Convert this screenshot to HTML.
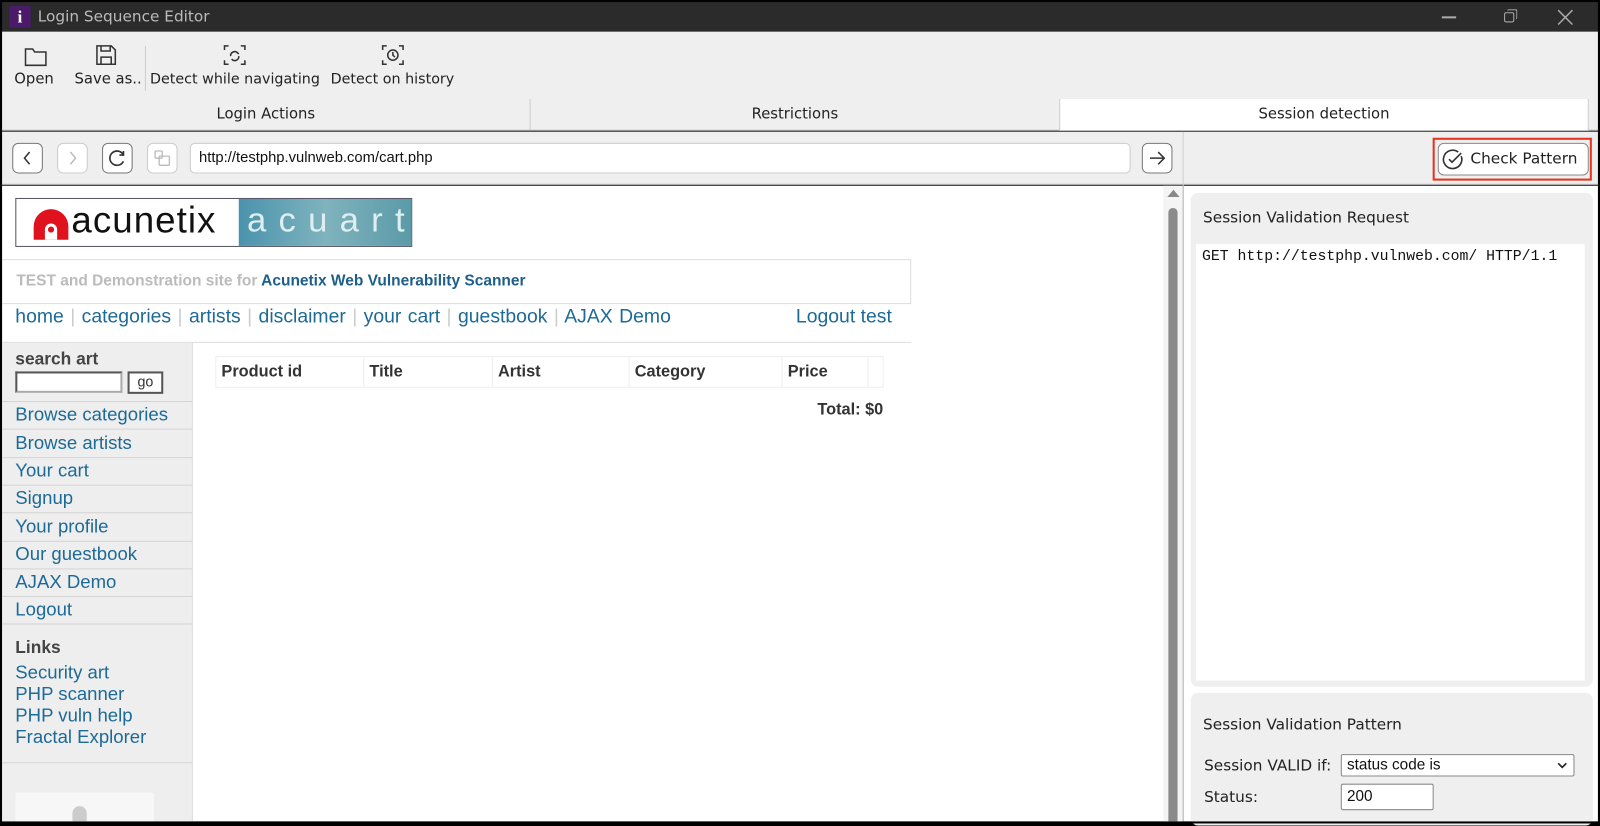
<!DOCTYPE html>
<html><head><meta charset="utf-8"><style>
*{box-sizing:border-box;margin:0;padding:0}
body{width:1600px;height:823px;overflow:hidden;background:#000;font-family:"Liberation Sans",sans-serif;position:relative}
#w{position:absolute;left:0;top:0;width:1568px;height:807px;transform:scale(1.020408);transform-origin:0 0;background:#000}
.a{position:absolute}
.ui{font-family:"DejaVu Sans","Liberation Sans",sans-serif}
.lnk{color:#1d6a96}
.side a{position:absolute;left:15px;font-size:18.2px;color:#1d6a96;text-decoration:none}
.sep{position:absolute;left:2px;width:186px;height:1px;background:#d4d4d4}
.nb{position:absolute;width:30px;height:30px;border:1px solid #777;border-radius:6px;background:#fff}
</style></head><body><div id="w">
<div class="a" style="left:2px;top:2px;width:1564px;height:29px;background:#2b2b2b"></div>
<div class="a" style="left:9px;top:6px;width:21px;height:21px;background:#4b1a6a;color:#fff;font:bold 17px 'Liberation Serif',serif;text-align:center;line-height:21px">i</div>
<div class="a ui" style="left:37px;top:7px;color:#bbb;font-size:15px">Login Sequence Editor</div>
<div class="a" style="left:1413px;top:16px;width:14px;height:1.5px;background:#aaa"></div>
<div class="a" style="left:1474px;top:12px;width:10px;height:10px;border:1.5px solid #aaa;border-radius:2px"></div>
<div class="a" style="left:1477px;top:9px;width:10px;height:10px;border-top:1.5px solid #aaa;border-right:1.5px solid #aaa;border-radius:2px"></div>
<svg class="a" style="left:1526px;top:9px" width="16" height="16"><path d="M1 1L15 15M15 1L1 15" stroke="#aaa" stroke-width="1.5"/></svg>
<div class="a" style="left:2px;top:31px;width:1564px;height:67px;background:#efefef;border-bottom:1px solid #ccc"></div>
<svg class="a" style="left:23px;top:44px" width="24" height="22" fill="none" stroke="#333" stroke-width="1.5"><path d="M2 4h7l2 3h11v13H2z"/></svg>
<svg class="a" style="left:93px;top:43px" width="22" height="22" fill="none" stroke="#333" stroke-width="1.5"><path d="M2 2h14l4 4v14H2z M6 2v5h9V2 M6 20v-7h10v7"/></svg>
<svg class="a" style="left:218px;top:43px" width="24" height="22" fill="none" stroke="#333" stroke-width="1.5"><path d="M2 6V2h4M18 2h4v4M22 16v4h-4M6 20H2v-4"/><path d="M8 12a4 4 0 0 1 7-3l1 1M16 12a4 4 0 0 1-7 3"/></svg>
<svg class="a" style="left:373px;top:43px" width="24" height="22" fill="none" stroke="#333" stroke-width="1.5"><path d="M2 6V2h4M18 2h4v4M22 16v4h-4M6 20H2v-4"/><circle cx="12" cy="11" r="5"/><path d="M12 8v3l2 2"/></svg>
<div class="a ui" style="left:14px;top:70px;font-size:14.5px;color:#222">Open</div>
<div class="a ui" style="left:73px;top:70px;font-size:14.5px;color:#222">Save as..</div>
<div class="a" style="left:142px;top:45px;width:1px;height:44px;background:#ccc"></div>
<div class="a ui" style="left:147px;top:70px;font-size:14px;color:#222">Detect while navigating</div>
<div class="a ui" style="left:324px;top:70px;font-size:14px;color:#222">Detect on history</div>
<div class="a" style="left:2px;top:97px;width:1564px;height:31px;background:#efefef;border-bottom:1px solid #ccc"></div>
<div class="a" style="left:519px;top:97px;width:1px;height:30px;background:#ccc"></div>
<div class="a" style="left:1038px;top:97px;width:519px;height:31px;background:#fff;border-left:1px solid #ccc;border-right:1px solid #ccc"></div>
<div class="a ui" style="left:2px;top:104px;width:517px;text-align:center;font-size:14.5px;color:#222">Login Actions</div>
<div class="a ui" style="left:520px;top:104px;width:518px;text-align:center;font-size:14.5px;color:#222">Restrictions</div>
<div class="a ui" style="left:1038px;top:104px;width:519px;text-align:center;font-size:14.5px;color:#222">Session detection</div>
<div class="a" style="left:2px;top:129px;width:1564px;height:52px;background:#efefef;border-bottom:1px solid #ccc"></div>
<div class="a" style="left:1159px;top:129px;width:1px;height:676px;background:#d0d0d0"></div>
<div class="nb" style="left:12px;top:140px"></div>
<svg class="a" style="left:12px;top:140px" width="30" height="30" fill="none" stroke="#333" stroke-width="1.5"><path d="M17 9l-5 6 5 6"/></svg>
<div class="nb" style="left:56px;top:140px;border-color:#ccc"></div>
<svg class="a" style="left:56px;top:140px" width="30" height="30" fill="none" stroke="#bbb" stroke-width="1.5"><path d="M13 9l5 6-5 6"/></svg>
<div class="nb" style="left:100px;top:140px"></div>
<svg class="a" style="left:100px;top:140px" width="30" height="30" fill="none" stroke="#333" stroke-width="1.6"><path d="M21 12a7 7 0 1 0 0 6M21 8v4h-4"/></svg>
<div class="nb" style="left:144px;top:140px;border-color:#ccc"></div>
<svg class="a" style="left:144px;top:140px" width="30" height="30" fill="none" stroke="#bbb" stroke-width="1.3"><rect x="8" y="8" width="7" height="7" rx="1"/><rect x="12" y="13" width="10" height="9" rx="1"/></svg>
<div class="a" style="left:186px;top:140px;width:922px;height:30px;background:#fff;border:1px solid #ccc;border-radius:5px"></div>
<div class="a" style="left:195px;top:147px;font-size:14.5px;color:#111">http://testphp.vulnweb.com/cart.php</div>
<div class="nb" style="left:1119px;top:140px"></div>
<svg class="a" style="left:1119px;top:140px" width="30" height="30" fill="none" stroke="#333" stroke-width="1.5"><path d="M8 15h14M16 9l6 6-6 6"/></svg>
<div class="a" style="left:1404px;top:135px;width:156px;height:42px;border:2px solid #e8321e"></div>
<div class="a" style="left:1409px;top:140px;width:148px;height:32px;background:#fff;border:1px solid #888;border-radius:6px"></div>
<svg class="a" style="left:1412px;top:144px" width="24" height="24" fill="none" stroke="#333" stroke-width="1.6"><path d="M20 9a9 9 0 1 1-3-4"/><path d="M8 12l3 3 9-9"/></svg>
<div class="a ui" style="left:1441px;top:146px;font-size:15px;color:#222">Check Pattern</div>
<div class="a" style="left:2px;top:182px;width:1157px;height:623px;background:#fff"></div>
<div class="a" style="left:1140px;top:182px;width:19px;height:623px;background:#f4f4f4"></div>
<div class="a" style="left:1144px;top:186px;width:0;height:0;border-left:6px solid transparent;border-right:6px solid transparent;border-bottom:7px solid #888"></div>
<div class="a" style="left:1145px;top:204px;width:9px;height:601px;background:#8a8a8a;border-radius:4px 4px 0 0"></div>
<div class="a" style="left:15px;top:194px;width:389px;height:48px;border:1px solid #556;background:#fff"></div>
<div class="a" style="left:234px;top:195px;width:169px;height:46px;background:linear-gradient(90deg,#4a93ad,#7fb3bd,#5b9aa8)"></div>
<div class="a" style="left:242px;top:197px;font-size:34px;color:#dfeef0;letter-spacing:12px">acuart</div>
<div class="a" style="left:33px;top:205px;width:34px;height:30px;border-radius:17px 17px 0 0;background:#e0121d"></div>
<div class="a" style="left:44px;top:219px;width:12px;height:16px;border-radius:6px 6px 0 0;background:#fff"></div>
<div class="a" style="left:47px;top:222px;width:6px;height:6px;border-radius:3px;background:#e0121d"></div>
<div class="a" style="left:70px;top:195px;font-size:36px;color:#111;letter-spacing:1px">acunetix</div>
<div class="a" style="left:2px;top:254px;width:891px;height:44px;border-top:1px solid #ddd;border-bottom:1px solid #ddd;border-right:1px solid #ddd"></div>
<div class="a" style="left:16px;top:267px;font-size:15.2px;font-weight:bold;color:#bbb">TEST and Demonstration site for <span style="color:#1d5f8a">Acunetix Web Vulnerability Scanner</span></div>
<div class="a lnk" style="left:15px;top:300px;font-size:19px;word-spacing:1px">home <span style="color:#ccc">|</span> categories <span style="color:#ccc">|</span> artists <span style="color:#ccc">|</span> disclaimer <span style="color:#ccc">|</span> your cart <span style="color:#ccc">|</span> guestbook <span style="color:#ccc">|</span> AJAX Demo</div>
<div class="a lnk" style="left:780px;top:300px;font-size:19px">Logout test</div>
<div class="a" style="left:2px;top:335px;width:891px;height:1px;background:#ddd"></div>
<div class="a" style="left:2px;top:336px;width:187px;height:469px;background:#eee;border-right:1px solid #ddd"></div>
<div class="side">
<div class="a" style="left:15px;top:342px;font-size:17px;font-weight:bold;color:#444">search art</div>
<div class="a" style="left:15px;top:364px;width:105px;height:21px;border:2px solid #555;border-color:#555 #aaa #aaa #555;background:#fff"></div>
<div class="a" style="left:125px;top:364px;width:35px;height:22px;border:2px solid #555;background:#fff;font-size:14px;text-align:center;color:#333">go</div>
<div class="sep" style="top:393px"></div>
<a style="top:396px">Browse categories</a><div class="sep" style="top:420px"></div>
<a style="top:424px">Browse artists</a><div class="sep" style="top:448px"></div>
<a style="top:451px">Your cart</a><div class="sep" style="top:475px"></div>
<a style="top:478px">Signup</a><div class="sep" style="top:502px"></div>
<a style="top:506px">Your profile</a><div class="sep" style="top:530px"></div>
<a style="top:533px">Our guestbook</a><div class="sep" style="top:557px"></div>
<a style="top:560px">AJAX Demo</a><div class="sep" style="top:584px"></div>
<a style="top:587px">Logout</a><div class="sep" style="top:611px"></div>
<div class="a" style="left:15px;top:625px;font-size:17px;font-weight:bold;color:#444">Links</div>
<a style="top:649px">Security art</a>
<a style="top:670px">PHP scanner</a>
<a style="top:691px">PHP vuln help</a>
<a style="top:712px">Fractal Explorer</a>
<div class="sep" style="top:747px"></div>
<div class="a" style="left:15px;top:777px;width:136px;height:28px;background:#f7f7f7"></div>
<div class="a" style="left:71px;top:790px;width:14px;height:15px;border-radius:7px 7px 0 0;background:#ccc"></div>
</div>
<div class="a" style="left:211px;top:349px;width:655px;height:31px;border:1px solid #eee;font-size:16px;font-weight:bold;color:#333">
<span class="a" style="left:5px;top:6px">Product id</span><span class="a" style="left:150px;top:6px">Title</span><span class="a" style="left:276px;top:6px">Artist</span><span class="a" style="left:410px;top:6px">Category</span><span class="a" style="left:560px;top:6px">Price</span>
<span class="a" style="left:144px;top:0;width:1px;height:29px;background:#eee"></span><span class="a" style="left:270px;top:0;width:1px;height:29px;background:#eee"></span><span class="a" style="left:404px;top:0;width:1px;height:29px;background:#eee"></span><span class="a" style="left:554px;top:0;width:1px;height:29px;background:#eee"></span><span class="a" style="left:638px;top:0;width:1px;height:29px;background:#eee"></span></div>
<div class="a" style="left:801px;top:393px;font-size:16px;font-weight:bold;color:#333">Total: $0</div>
<div class="a" style="left:1160px;top:182px;width:406px;height:623px;background:#fff"></div>
<div class="a" style="left:1167px;top:189px;width:394px;height:484px;background:#efefef;border-radius:7px"></div>
<div class="a ui" style="left:1179px;top:204px;font-size:15px;color:#222">Session Validation Request</div>
<div class="a" style="left:1172px;top:239px;width:381px;height:428px;background:#fff"></div>
<div class="a" style="left:1178px;top:244px;font-family:'Liberation Mono',monospace;font-size:14.5px;color:#111">GET http://testphp.vulnweb.com/ HTTP/1.1</div>
<div class="a" style="left:1167px;top:679px;width:394px;height:130px;background:#efefef;border-radius:7px"></div>
<div class="a ui" style="left:1179px;top:701px;font-size:15px;color:#222">Session Validation Pattern</div>
<div class="a ui" style="left:1180px;top:741px;font-size:15px;color:#222">Session VALID if:</div>
<div class="a" style="left:1314px;top:739px;width:229px;height:22px;background:#fff;border:1px solid #888;border-radius:2px;font-size:15px;color:#111;padding:1px 5px">status code is</div>
<svg class="a" style="left:1526px;top:746px" width="10" height="8" fill="none" stroke="#222" stroke-width="1.6"><path d="M1 2l4 4 4-4"/></svg>
<div class="a ui" style="left:1180px;top:772px;font-size:15px;color:#222">Status:</div>
<div class="a" style="left:1314px;top:768px;width:91px;height:26px;background:#fff;border:1px solid #888;border-radius:2px;font-size:15px;color:#111;padding:3px 5px">200</div>
<div class="a" style="left:0;top:0;width:1568px;height:807px;border:2px solid #000;pointer-events:none"></div>
</div></body></html>
